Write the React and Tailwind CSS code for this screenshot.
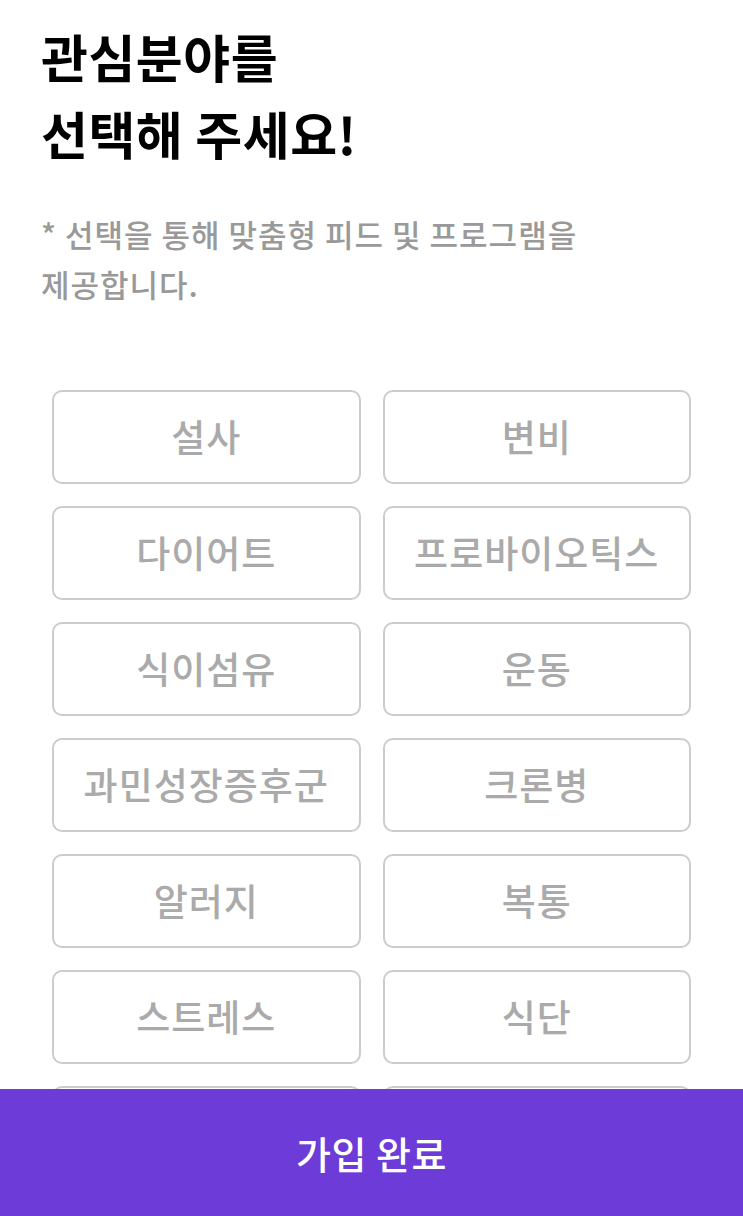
const topics = [
  "설사",
  "변비",
  "다이어트",
  "프로바이오틱스",
  "식이섬유",
  "운동",
  "과민성장증후군",
  "크론병",
  "알러지",
  "복통",
  "스트레스",
  "식단",
  "수면",
  "피부",
];

const App = () => {
  return (
    <div
      className="relative min-h-screen w-full bg-white pb-[140px]"
      style={{ fontFamily: '"Noto Sans CJK KR", "Noto Sans", sans-serif' }}
    >
      {/* heading */}
      <div className="px-[41px] pt-[18px]">
        <h1 className="text-[51px] font-bold leading-[77px] tracking-[0.5px] text-black">
          관심분야를
          <br />
          선택해 주세요!
        </h1>
        <p className="mt-[37px] text-[31px] font-medium leading-[50px] tracking-[1px] text-[#999999]">
          * 선택을 통해 맞춤형 피드 및 프로그램을
          <br />
          제공합니다.
        </p>
      </div>

      {/* topic grid */}
      <div className="mt-[81px] grid grid-cols-2 gap-[22px] px-[52px]">
        {topics.map((t) => (
          <button
            key={t}
            className="flex h-[94px] items-center justify-center rounded-[10px] border-2 border-[#cccccc] bg-white text-[37px] font-medium tracking-[1px] text-[#aaaaaa]"
          >
            {t}
          </button>
        ))}
      </div>

      {/* submit bar */}
      <button className="fixed bottom-0 left-0 flex h-[127px] w-full items-center justify-center bg-[#6c3bd8] text-[38px] font-medium tracking-[0.5px] text-white">
        가입 완료
      </button>
    </div>
  );
};

export default App;
